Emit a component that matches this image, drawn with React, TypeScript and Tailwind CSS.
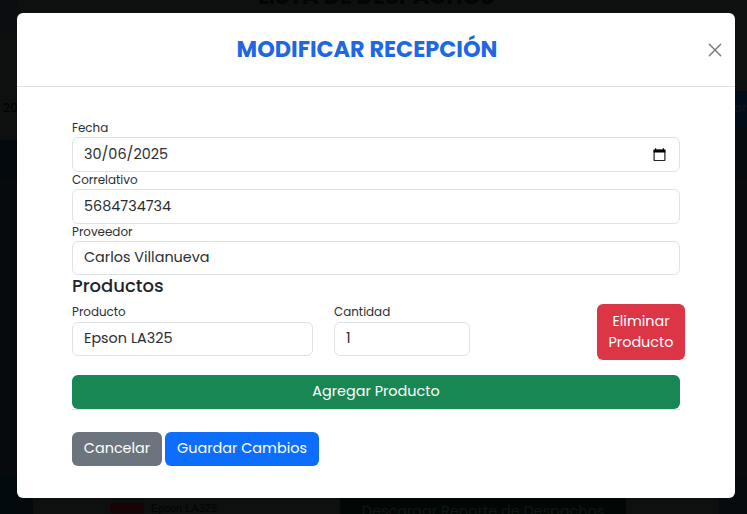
import type { ReactNode } from "react";

function Field({ label, value, height, labelHeight = "h-[17px]", children }: {
  label: string; value: string; height: string; labelHeight?: string; children?: ReactNode;
}) {
  return (
    <label className="block">
      <span className={`block text-[11.9px] leading-[16px] whitespace-nowrap text-[#2a2e32] ${labelHeight}`}>{label}</span>
      <span className={`flex items-center justify-between rounded-[6px] border border-[#dee2e6] pr-[13px] pl-[11px] text-[14.4px] leading-[20px] ${height}`}>
        <span className="pb-[2px] whitespace-nowrap text-[#2a2e32]">{value}</span>
        {children}
      </span>
    </label>
  );
}

function CalendarIcon() {
  return (
    <svg width="13" height="14" viewBox="0 0 13 14" fill="none" aria-hidden="true">
      <rect x="1.1" y="2.3" width="10.8" height="10.2" rx=".6" stroke="#222" strokeWidth="1.2" />
      <path d="M.6 1.4h11.8v3H.6zM2 .2h1.2v2H2zM9.8.2H11v2H9.8z" fill="#000" />
    </svg>
  );
}

function Backdrop() {
  return (
    <div className="flex h-full flex-col justify-between overflow-hidden bg-[#0e0f0f]">
      <div className="flex h-[180px] justify-between">
        <div className="flex w-[18px] flex-col">
          <div className="h-[33px] bg-[#0b0d11]" />
          <div className="h-[107px] pt-[67px] pl-[3px] text-[12px] leading-[16px] text-black">20</div>
          <div className="h-[40px] bg-[#03090d]" />
        </div>
        <h1 className="-mt-[18px] h-[28px] text-[22.4px] leading-[28px] font-bold text-[#020508]">LISTA DE DESPACHOS</h1>
        <div className="w-[13px]">
          <div className="h-[91px]" />
          <div className="h-[36px] bg-[#020b18] pt-[8px] text-[12px] font-semibold text-[#10141b]">ar</div>
          <div className="h-[53px] bg-[#080b0e]" />
        </div>
      </div>
      <div className="flex flex-1 justify-between">
        <div className="w-[18px] bg-[#060a0c]" />
        <div className="w-[13px] bg-[#090b0d]" />
      </div>
      <div className="flex h-[38px] items-end">
        <div className="h-[38px] w-[33px] bg-[#030a0e]" />
        <div className="ml-[77px] flex h-[15px] gap-[7px] font-['Liberation_Sans',sans-serif] text-[11px] leading-[19px] text-[#030303]">
          <div className="mt-[4px] h-[10px] w-[34px] bg-[#160406]" />
          <span>Epson LA325</span>
        </div>
        <div className="ml-auto h-[16px] w-[286px] overflow-hidden bg-[#010705] pt-[3px] text-center text-[14.4px] leading-[20px] text-[#101713]">Descargar Reporte de Despachos</div>
        <div className="ml-[93px] h-[38px] w-[28px] bg-[#080b0e]" />
      </div>
    </div>
  );
}

export default function App() {
  return (
    <main className="relative h-[514px] w-[747px] overflow-hidden font-['Poppins','Inter','Liberation_Sans',sans-serif] text-[#212529]">
      <Backdrop />
      <section role="dialog" aria-label="Modificar recepción" className="absolute top-[13px] left-[17px] flex h-[485px] w-[718px] flex-col rounded-[6px] bg-white">
        <header className="flex h-[74px] items-center border-b border-[#dee2e6] pr-[13px]">
          <h2 className="flex-1 pb-px pl-[9px] text-center text-[22.4px] leading-[32px] font-bold text-[#2067e1]">MODIFICAR RECEPCIÓN</h2>
          <button aria-label="Cerrar" className="flex size-[14px] items-center justify-center">
            <svg width="14" height="14" viewBox="0 0 14 14" aria-hidden="true">
              <path d="m1.3 1.3 11.4 11.4M12.7 1.3 1.3 12.7" stroke="#777" strokeWidth="1.4" strokeLinecap="round" />
            </svg>
          </button>
        </header>
        <div className="px-[55px] pt-[33px]">
          <Field label="Fecha" value="30/06/2025" height="h-[35px]"><CalendarIcon /></Field>
          <Field label="Correlativo" value="5684734734" height="h-[35px]" />
          <Field label="Proveedor" value="Carlos Villanueva" height="h-[34px]" />
          <h3 className="h-[29px] text-[18px] leading-[22px] font-medium">Productos</h3>
          <div className="flex h-[71px] items-start">
            <div className="w-[241px]"><Field label="Producto" value="Epson LA325" height="h-[34px]" labelHeight="h-[18px]" /></div>
            <div className="ml-[21px] w-[136px]"><Field label="Cantidad" value="1" height="h-[34px]" labelHeight="h-[18px]" /></div>
            <button className="-mr-[5px] ml-auto h-[56px] w-[88px] rounded-[6px] bg-[#dc3545] text-[14.4px] leading-[21px] text-white">Eliminar Producto</button>
          </div>
          <div className="border-b border-[#dee2e6]">
            <button className="block h-[34px] w-full rounded-[6px] bg-[#198754] pb-[2px] text-[14.4px] leading-[20px] text-white">Agregar Producto</button>
          </div>
          <footer className="flex gap-[3px] pt-[22px] text-[14.4px] leading-[20px] text-white">
            <button className="h-[34px] w-[90px] rounded-[6px] bg-[#6c757d] pb-[2px]">Cancelar</button>
            <button className="h-[34px] w-[154px] rounded-[6px] bg-[#0d6efd] pb-[2px]">Guardar Cambios</button>
          </footer>
        </div>
      </section>
    </main>
  );
}
